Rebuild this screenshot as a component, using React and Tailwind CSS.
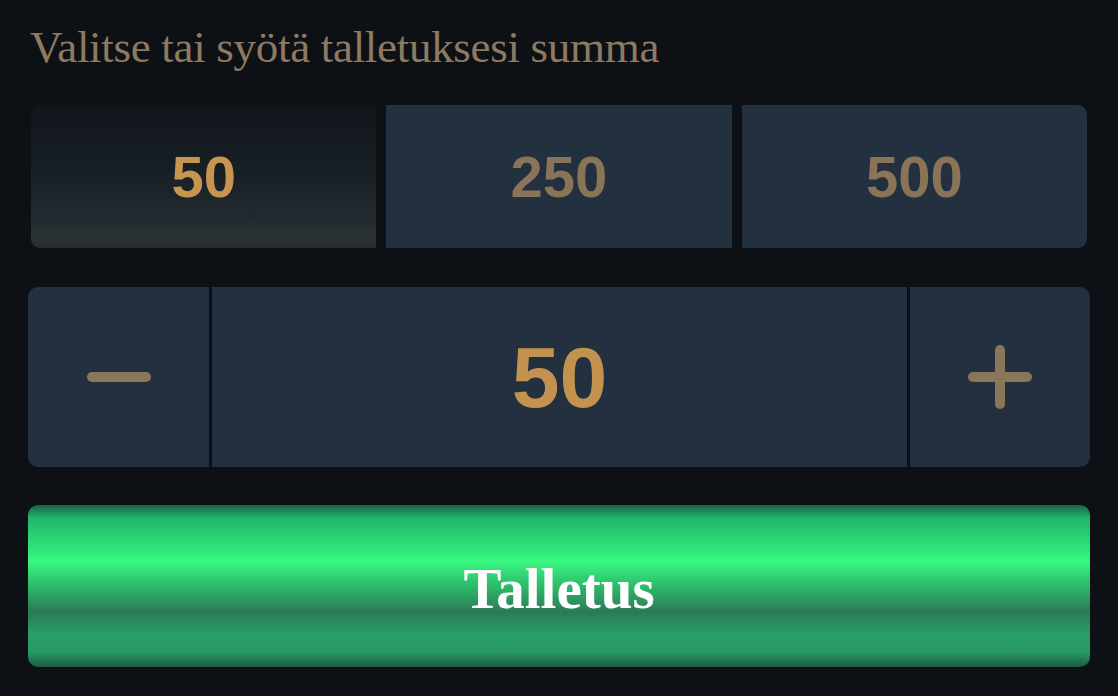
const presets = [50, 250, 500];

function MinusIcon() {
  return (
    <svg width="66" height="14" viewBox="0 0 66 14" fill="none">
      <line x1="6" y1="7" x2="60" y2="7" stroke="#8c7659" strokeWidth="10" strokeLinecap="round" />
    </svg>
  );
}

function PlusIcon() {
  return (
    <svg width="66" height="66" viewBox="0 0 66 66" fill="none">
      <line x1="6" y1="33" x2="60" y2="33" stroke="#8c7659" strokeWidth="10" strokeLinecap="round" />
      <line x1="33" y1="6" x2="33" y2="60" stroke="#8c7659" strokeWidth="10" strokeLinecap="round" />
    </svg>
  );
}

export default function App() {
  const selected = 50;

  return (
    <div className="w-[1118px] h-[696px] bg-[#0d1115] px-[28px] pt-[22px] overflow-hidden">
      <h1 className="font-['Liberation_Serif',serif] text-[45px] leading-[50px] text-[#8d7a60] pl-[2px] tracking-[-0.3px]">
        Valitse tai syötä talletuksesi summa
      </h1>

      {/* preset amounts */}
      <div className="mt-[33px] mx-[3px] grid grid-cols-3 gap-[10px] h-[143px]">
        {presets.map((p, i) => {
          const active = p === selected;
          return (
            <button
              key={p}
              className={`flex items-center justify-center font-['Liberation_Sans',sans-serif] font-bold text-[58px] ${
                active
                  ? 'bg-[linear-gradient(180deg,#0f151b_0%,#161d23_40%,#242b30_80%,#2b3337_92%,#262d31_100%)] text-[#c8954f]'
                  : 'bg-[#22303f] text-[#8a7458]'
              } ${i === 0 ? 'rounded-l-[9px]' : ''} ${i === presets.length - 1 ? 'rounded-r-[9px]' : ''}`}
            >
              {p}
            </button>
          );
        })}
      </div>

      {/* stepper */}
      <div className="mt-[39px] flex h-[180px] rounded-[10px] overflow-hidden bg-[#0d1115] gap-[3px]">
        <button className="w-[181px] bg-[#22303f] flex items-center justify-center">
          <MinusIcon />
        </button>
        <div className="flex-1 bg-[#22303f] flex items-center justify-center font-['Liberation_Sans',sans-serif] font-bold text-[86px] text-[#c4924f]">
          50
        </div>
        <button className="w-[180px] bg-[#22303f] flex items-center justify-center">
          <PlusIcon />
        </button>
      </div>

      {/* submit */}
      <button className="mt-[38px] w-full h-[162px] rounded-[10px] flex items-center justify-center pt-[6px] bg-[linear-gradient(180deg,#1a6245_0%,#22b56b_8%,#2ee27a_26%,#39f780_35%,#2fc66e_47%,#2b7a57_66%,#28a066_80%,#279a63_91%,#1b5a3f_100%)] font-['Liberation_Serif',serif] font-bold text-[57px] text-white">
        Talletus
      </button>
    </div>
  );
}
